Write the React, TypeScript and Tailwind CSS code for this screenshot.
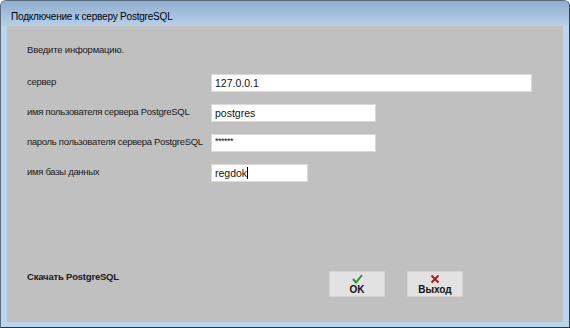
import React from "react";

function Field({ label, value, width, mask, cursor }: { label: string; value: string; width: string; mask?: boolean; cursor?: boolean }) {
  return (
    <div className="flex items-center h-[18px]">
      <div className="w-[184px] shrink-0 whitespace-nowrap text-[9.5px] tracking-[-0.3px] text-[#1a1a1a] leading-none pb-[3px]">{label}</div>
      <div className={`${width} h-[18px] bg-white border border-[#d9d9d9] flex items-center pl-[3px] text-[10.5px] text-[#111] leading-none`}>
        {mask ? <span className="text-[9px] tracking-[-0.5px] pb-[3px]">******</span> : <span>{value}</span>}
        {cursor && <span className="inline-block w-[1px] h-[12px] bg-black" />}
      </div>
    </div>
  );
}

export default function App() {
  return (
    <div className="w-[570px] h-[328px] flex flex-col border border-[#5b6b7b] border-r-[#27404e] border-b-[#1d3a48] rounded-t-[6px] overflow-hidden bg-[#bcd5ec]" style={{ fontFamily: '"Liberation Sans", Arial, sans-serif' }}>
      <div className="h-[25px] shrink-0 bg-gradient-to-b from-[#8eaed0] to-[#b8cfe8] flex items-center pl-[10px] pt-[5px] text-[10px] tracking-[-0.2px] text-black">
        Подключение к серверу PostgreSQL
      </div>
      <div className="flex-1 flex flex-col mx-[6px] mb-[5px] bg-[#c0c0c0] pl-[20px] pt-[19px]">
        <div className="text-[9.5px] tracking-[-0.2px] text-[#1a1a1a] leading-none h-[12px]">Введите информацию.</div>
        <div className="flex flex-col gap-[12px] mt-[17px]">
          <Field label="сервер" value="127.0.0.1" width="w-[321px]" />
          <Field label="имя пользователя сервера PostgreSQL" value="postgres" width="w-[165px]" />
          <Field label="пароль пользователя сервера PostgreSQL" value="" width="w-[165px]" mask />
          <Field label="имя базы данных" value="regdok" width="w-[97px]" cursor />
        </div>
        <div className="flex-1" />
        <div className="flex items-start mb-[25px]">
          <div className="w-[302px] text-[9.5px] tracking-[-0.2px] font-bold text-[#1a1a1a] leading-none pt-[1px]">Скачать PostgreSQL</div>
          <button className="w-[56px] h-[26px] bg-[#e2e2e2] border border-[#d2d2d2] flex flex-col items-center justify-center leading-none">
            <svg width="11" height="10" viewBox="0 0 11 10"><path d="M1 5 L4 8.5 L10 1" stroke="#1a9a2a" strokeWidth="2" fill="none" /></svg>
            <span className="text-[10px] font-bold text-[#111] mt-[1px]">OK</span>
          </button>
          <button className="ml-[22px] w-[56px] h-[26px] bg-[#e2e2e2] border border-[#d2d2d2] flex flex-col items-center justify-center leading-none">
            <svg width="10" height="10" viewBox="0 0 10 10"><path d="M1.5 1.5 L8.5 8.5 M8.5 1.5 L1.5 8.5" stroke="#a81c1c" strokeWidth="2" fill="none" /></svg>
            <span className="text-[10px] font-bold text-[#111] mt-[1px]">Выход</span>
          </button>
        </div>
      </div>
    </div>
  );
}
